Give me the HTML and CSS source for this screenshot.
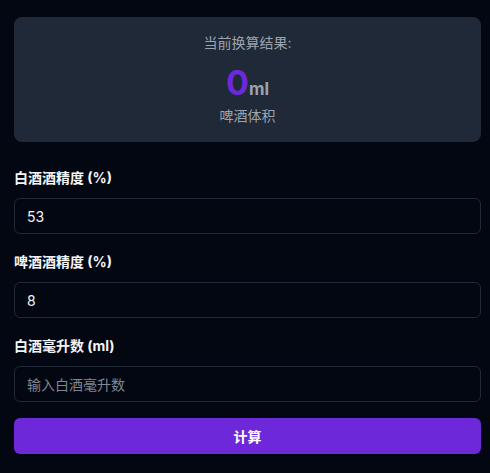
FILE: index.html
```
<!DOCTYPE html>
<html lang="zh">
<head>
<meta charset="utf-8">
<link rel="stylesheet" href="styles.css">
</head>
<body>
<div class="app">
  <div class="result">
    <div class="result-title">当前换算结果:</div>
    <div class="result-value"><span class="num">0</span><span class="unit">ml</span></div>
    <div class="result-sub">啤酒体积</div>
  </div>
  <div class="form">
    <div class="field">
      <label class="label">白酒酒精度 (%)</label>
      <input class="input" type="text" value="53">
    </div>
    <div class="field">
      <label class="label">啤酒酒精度 (%)</label>
      <input class="input" type="text" value="8">
    </div>
    <div class="field">
      <label class="label">白酒毫升数 (ml)</label>
      <input class="input" type="text" placeholder="输入白酒毫升数">
    </div>
    <button class="btn">计算</button>
  </div>
</div>
</body>
</html>
```
FILE: styles.css
```
* { box-sizing: border-box; }
html, body { margin: 0; padding: 0; background: #030712; }
body {
  font-family: Inter, "Noto Sans CJK SC", sans-serif;
  color: #f3f4f6;
}
.app {
  padding: 17px 9px 0 14px;
}
.result {
  background: #1f2937;
  border-radius: 8px;
  padding: 16px;
  text-align: center;
  margin-bottom: 24px;
}
.result-title {
  font-size: 14px;
  line-height: 20px;
  color: #9ca3af;
}
.result-value {
  margin-top: 12px;
  display: flex;
  justify-content: center;
  align-items: baseline;
}
.num {
  font-size: 34px;
  line-height: 36px;
  font-weight: 700;
  color: #6d28d9;
}
.unit {
  font-size: 17px;
  line-height: 20px;
  font-weight: 700;
  color: #9ca3af;
}
.result-sub {
  margin-top: 5px;
  font-size: 14px;
  line-height: 20px;
  color: #9ca3af;
}
.form {
  display: flex;
  flex-direction: column;
  gap: 16px;
}
.field {
  display: flex;
  flex-direction: column;
}
.label {
  font-size: 14px;
  line-height: 24px;
  font-weight: 700;
  color: #f3f4f6;
  margin-bottom: 8px;
}
.input {
  height: 36px;
  border: 1px solid #1f2937;
  border-radius: 6px;
  background: #030712;
  color: #f3f4f6;
  font-family: inherit;
  font-size: 14px;
  padding: 0 12px;
  outline: none;
}
.input::placeholder { color: #7f8693; }
.btn {
  height: 36px;
  border: none;
  border-radius: 6px;
  background: #6d28d9;
  color: #ffffff;
  font-family: inherit;
  font-size: 14px;
  font-weight: 700;
}
```
